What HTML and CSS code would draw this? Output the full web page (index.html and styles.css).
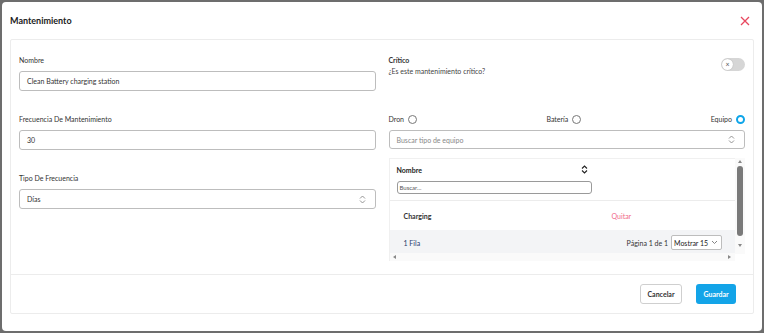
FILE: index.html
```html
<!DOCTYPE html>
<html lang="es">
<head>
  <meta charset="UTF-8" />
  <meta name="viewport" content="width=device-width, initial-scale=1.0" />
  <title>Mantenimiento</title>
  <link rel="stylesheet" href="styles.css">
</head>
<body>
  <div class="modal">
    <header class="modal-header">
      <h2>Mantenimiento</h2>
      <button class="close-btn" aria-label="Cerrar">
        <svg width="10" height="10" viewBox="0 0 10 10"><path d="M1 1 L9 9 M9 1 L1 9" stroke="#e8475f" stroke-width="1.3" fill="none"/></svg>
      </button>
    </header>

    <div class="card">
      <div class="card-body">
        <div class="column">
          <div class="field">
            <label>Nombre</label>
            <div class="input">Clean Battery charging station</div>
          </div>
          <div class="field">
            <label>Frecuencia De Mantenimiento</label>
            <div class="input">30</div>
          </div>
          <div class="field">
            <label>Tipo De Frecuencia</label>
            <div class="input select">
              <span>Días</span>
              <svg class="updown" width="7" height="9" viewBox="0 0 7 9"><path d="M1 3.5 L3.5 1 L6 3.5 M1 5.5 L3.5 8 L6 5.5" stroke="#888" stroke-width="0.9" fill="none"/></svg>
            </div>
          </div>
        </div>

        <div class="column">
          <div class="critico">
            <div>
              <div class="critico-title">Crítico</div>
              <div class="critico-sub">¿Es este mantenimiento crítico?</div>
            </div>
            <div class="toggle"><span class="knob">×</span></div>
          </div>

          <div class="radios">
            <span class="radio-item">Dron <span class="radio"></span></span>
            <span class="radio-item">Batería <span class="radio"></span></span>
            <span class="radio-item">Equipo <span class="radio checked"></span></span>
          </div>

          <div class="input select placeholder">
            <span>Buscar tipo de equipo</span>
            <svg class="updown" width="7" height="9" viewBox="0 0 7 9"><path d="M1 3.5 L3.5 1 L6 3.5 M1 5.5 L3.5 8 L6 5.5" stroke="#888" stroke-width="0.9" fill="none"/></svg>
          </div>

          <div class="table-wrap">
            <div class="table-main">
              <div class="table">
                <div class="thead">
                  <div class="th">
                    <div class="th-title">
                      <span>Nombre</span>
                      <svg width="7" height="9" viewBox="0 0 7 9"><path d="M1 3.5 L3.5 1 L6 3.5 M1 5.5 L3.5 8 L6 5.5" stroke="#222" stroke-width="1.1" fill="none"/></svg>
                    </div>
                    <div class="filter">Buscar...</div>
                  </div>
                  <div class="th"></div>
                </div>
                <div class="row">
                  <div class="td">Charging</div>
                  <div class="td remove">Quitar</div>
                </div>
                <div class="table-footer">
                  <span class="count">1 Fila</span>
                  <div class="pager">
                    <span>Página 1 de 1</span>
                    <div class="page-size">Mostrar 15
                      <svg width="7" height="5" viewBox="0 0 7 5"><path d="M1 1 L3.5 3.5 L6 1" stroke="#777" stroke-width="0.9" fill="none"/></svg>
                    </div>
                  </div>
                </div>
              </div>
              <div class="hscroll">
                <span class="arrow-left"></span>
                <span class="arrow-right"></span>
              </div>
            </div>
            <div class="vscroll">
              <span class="arrow-up"></span>
              <span class="thumb"></span>
              <span class="arrow-down"></span>
            </div>
          </div>
        </div>
      </div>

      <div class="card-footer">
        <button class="btn btn-outline">Cancelar</button>
        <button class="btn btn-primary">Guardar</button>
      </div>
    </div>
  </div>
</body>
</html>
```

FILE: styles.css
```css
* {
  box-sizing: border-box;
}

html, body {
  height: 100%;
}

body {
  margin: 0;
  padding: 2px;
  background-color: #6d6d6d;
  font-family: Lato, "Noto Sans", sans-serif;
  font-size: 7px;
  color: #333;
}

.modal {
  height: 100%;
  background-color: #fff;
  border-radius: 4px;
  display: flex;
  flex-direction: column;
}

.modal-header {
  height: 37px;
  display: flex;
  align-items: center;
  justify-content: space-between;
  padding: 0 12px 0 8px;
}

.modal-header h2 {
  margin: 0;
  font-size: 9px;
  font-weight: 700;
  color: #222;
}

.close-btn {
  background: none;
  border: none;
  padding: 0;
  display: flex;
  cursor: pointer;
}

.card {
  margin: 0 8px;
  border: 1px solid #ececec;
  border-radius: 2px;
}

.card-body {
  height: 235px;
  display: grid;
  grid-template-columns: 1fr 1fr;
  gap: 13px;
  padding: 14px 8px 0 8px;
  border-bottom: 1px solid #ececec;
}

.column {
  display: flex;
  flex-direction: column;
}

.field {
  margin-bottom: 22px;
}

.field label {
  display: block;
  height: 12px;
  line-height: 12px;
  margin-bottom: 5px;
  color: #333;
}

.input {
  height: 20px;
  border: 1px solid #bdbdbd;
  border-radius: 3px;
  padding: 0 7px;
  display: flex;
  align-items: center;
  justify-content: space-between;
  color: #333;
}

.placeholder {
  color: #888;
}

.updown {
  margin-right: 2px;
}

.critico {
  display: flex;
  justify-content: space-between;
  align-items: flex-start;
  height: 41px;
}

.critico-title {
  height: 12px;
  line-height: 12px;
  font-weight: 700;
  color: #333;
}

.critico-sub {
  line-height: 10px;
  color: #444;
}

.toggle {
  width: 24px;
  height: 13px;
  margin-top: 4px;
  border-radius: 7px;
  background-color: #d6d6d6;
  display: flex;
  align-items: center;
  padding-left: 1px;
}

.knob {
  width: 11px;
  height: 11px;
  border-radius: 50%;
  background-color: #fff;
  box-shadow: 0 0 1px rgba(0, 0, 0, 0.3);
  font-size: 7px;
  line-height: 11px;
  text-align: center;
  color: #555;
}

.radios {
  display: flex;
  justify-content: space-between;
  align-items: center;
  height: 12px;
  margin: 18px 0 5px 0;
  color: #333;
}

.radio-item {
  display: flex;
  align-items: center;
  gap: 4px;
}

.radio {
  width: 9px;
  height: 9px;
  border: 1px solid #777;
  border-radius: 50%;
}

.radio.checked {
  border: 2.5px solid #0ea5e9;
}

.column > .select {
  height: 19px;
}

.table-wrap {
  margin-top: 9px;
  height: 103px;
  display: flex;
}

.table-main {
  flex: 1;
  display: flex;
  flex-direction: column;
  border-left: 1px solid #f0f0f0;
  border-top: 1px solid #f0f0f0;
}

.table {
  flex: 1;
  display: flex;
  flex-direction: column;
}

.thead,
.row {
  display: grid;
  grid-template-columns: 210px 1fr;
}

.thead {
  height: 42px;
  border-bottom: 1px solid #ececec;
}

.th {
  padding: 5px 0 0 7px;
}

.th-title {
  display: flex;
  justify-content: space-between;
  align-items: center;
  height: 11px;
  padding-right: 12px;
  font-weight: 700;
  color: #222;
}

.filter {
  margin-top: 6px;
  width: 195px;
  height: 13px;
  border: 1px solid #9a9a9a;
  border-radius: 3px;
  padding: 0 2px;
  font-size: 6px;
  line-height: 11px;
  color: #555;
}

.row {
  height: 29px;
  align-items: center;
}

.td {
  padding-left: 14px;
  font-weight: 700;
  color: #333;
}

.td.remove {
  padding-left: 12px;
  font-weight: 400;
  color: #f06a8a;
}

.table-footer {
  height: 23px;
  background-color: #f3f4f6;
  display: flex;
  align-items: center;
  justify-content: space-between;
  padding: 2px 13px 0 14px;
}

.count {
  color: #1e3a6e;
}

.pager {
  display: flex;
  align-items: center;
  gap: 3px;
  color: #333;
}

.page-size {
  width: 51px;
  height: 15px;
  border: 1px solid #bdbdbd;
  border-radius: 2px;
  background-color: #fff;
  display: flex;
  align-items: center;
  justify-content: space-between;
  padding: 0 3px 0 2px;
  color: #222;
}

.hscroll {
  height: 8px;
  display: flex;
  align-items: center;
  justify-content: space-between;
  padding: 0 4px 0 3px;
  background-color: #fafafa;
}

.arrow-left {
  border-top: 2.5px solid transparent;
  border-bottom: 2.5px solid transparent;
  border-right: 3px solid #888;
}

.arrow-right {
  border-top: 2.5px solid transparent;
  border-bottom: 2.5px solid transparent;
  border-left: 3px solid #888;
}

.vscroll {
  width: 10px;
  height: 96px;
  display: flex;
  flex-direction: column;
  align-items: center;
  padding-top: 2px;
  background-color: #fafafa;
}

.arrow-up {
  border-left: 2.5px solid transparent;
  border-right: 2.5px solid transparent;
  border-bottom: 3px solid #888;
}

.thumb {
  margin-top: 3px;
  width: 6px;
  height: 70px;
  border-radius: 3px;
  background-color: #7a7a7a;
}

.arrow-down {
  margin-top: 8px;
  border-left: 2.5px solid transparent;
  border-right: 2.5px solid transparent;
  border-top: 3px solid #888;
}

.card-footer {
  height: 38px;
  display: flex;
  align-items: center;
  justify-content: flex-end;
  gap: 14px;
  padding-right: 17px;
}

.btn {
  height: 20px;
  border-radius: 3px;
  font-family: inherit;
  font-size: 7px;
  font-weight: 700;
  cursor: pointer;
}

.btn-outline {
  width: 42px;
  background-color: #fff;
  border: 1px solid #cfcfcf;
  color: #333;
}

.btn-primary {
  width: 40px;
  background-color: #13a4e8;
  border: none;
  color: #fff;
}
```
